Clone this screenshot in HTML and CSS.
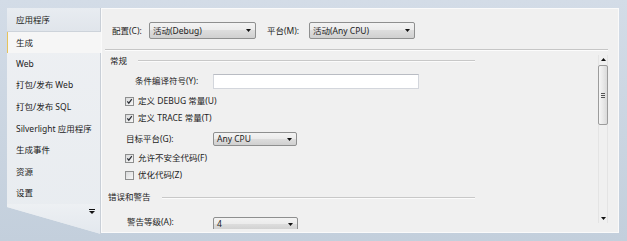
FILE: index.html
```html
<!DOCTYPE html>
<html>
<head>
<meta charset="utf-8">
<link rel="stylesheet" href="styles.css">
</head>
<body>
<div class="app">
  <nav class="tabs">
    <div class="tab tab-first">应用程序</div>
    <div class="tab tab-selected">生成</div>
    <div class="tab">Web</div>
    <div class="tab">打包/发布 Web</div>
    <div class="tab">打包/发布 SQL</div>
    <div class="tab">Silverlight 应用程序</div>
    <div class="tab">生成事件</div>
    <div class="tab">资源</div>
    <div class="tab">设置</div>
    <div class="tabs-fill">
      <svg class="more" width="6" height="5" viewBox="0 0 6 5"><rect x="0" y="0" width="6" height="1" fill="#111"/><path d="M0 2H6L3 5Z" fill="#111"/></svg>
    </div>
  </nav>
  <main class="panel">
    <div class="config-row">
      <span class="cfg-label cfg-label-1">配置(C):</span>
      <div class="combo combo-cfg"><span>活动(Debug)</span><svg class="arrow" width="5" height="3" viewBox="0 0 5 3"><path d="M0 0H5L2.5 3Z" fill="#111"/></svg></div>
      <span class="cfg-label cfg-label-2">平台(M):</span>
      <div class="combo combo-plat"><span>活动(Any CPU)</span><svg class="arrow" width="5" height="3" viewBox="0 0 5 3"><path d="M0 0H5L2.5 3Z" fill="#111"/></svg></div>
    </div>
    <div class="sep"></div>
    <div class="scroll">
      <div class="content">
        <div class="row r1 group"><span class="group-title">常规</span><span class="group-line"></span></div>
        <div class="row r2 field-sym"><span class="lbl lbl-sym">条件编译符号(Y):</span><div class="textbox"></div></div>
        <div class="row r3 check"><span class="cb"><svg width="7" height="7" viewBox="0 0 7 7"><path d="M1.3 3.4L2.8 5.2L5.8 1.2" fill="none" stroke="#2b2f36" stroke-width="1.2"/></svg></span><span>定义 DEBUG 常量(U)</span></div>
        <div class="row r4 check"><span class="cb"><svg width="7" height="7" viewBox="0 0 7 7"><path d="M1.3 3.4L2.8 5.2L5.8 1.2" fill="none" stroke="#2b2f36" stroke-width="1.2"/></svg></span><span>定义 TRACE 常量(T)</span></div>
        <div class="row r5 field"><span class="lbl lbl-wide">目标平台(G):</span><div class="combo combo-small"><span>Any CPU</span><svg class="arrow" width="5" height="3" viewBox="0 0 5 3"><path d="M0 0H5L2.5 3Z" fill="#111"/></svg></div></div>
        <div class="row r6 check"><span class="cb"><svg width="7" height="7" viewBox="0 0 7 7"><path d="M1.3 3.4L2.8 5.2L5.8 1.2" fill="none" stroke="#2b2f36" stroke-width="1.2"/></svg></span><span>允许不安全代码(F)</span></div>
        <div class="row r7 check"><span class="cb"></span><span>优化代码(Z)</span></div>
        <div class="row r8 group group-err"><span class="group-title">错误和警告</span><span class="group-line"></span></div>
        <div class="row r9 field field-warn"><span class="lbl lbl-warn">警告等级(A):</span><div class="combo combo-small combo-warn"><span>4</span><svg class="arrow" width="5" height="3" viewBox="0 0 5 3"><path d="M0 0H5L2.5 3Z" fill="#111"/></svg></div></div>
      </div>
      <div class="scrollbar">
        <div class="sb-btn sb-up"><svg width="5" height="3" viewBox="0 0 5 3"><path d="M0 3H5L2.5 0Z" fill="#111"/></svg></div>
        <div class="sb-thumb"><span class="grip"></span><span class="grip"></span><span class="grip"></span></div>
        <div class="sb-track"></div>
        <div class="sb-btn sb-down"><svg width="5" height="3" viewBox="0 0 5 3"><path d="M0 0H5L2.5 3Z" fill="#111"/></svg></div>
      </div>
    </div>
  </main>
</div>
</body>
</html>
```

FILE: styles.css
```css
* { box-sizing: border-box; }
html, body { margin: 0; padding: 0; }
body {
  width: 627px;
  height: 241px;
  overflow: hidden;
  background: linear-gradient(#d3dce7, #c3cfdc);
  font-family: "Noto Sans", "Noto Sans CJK SC", sans-serif;
  font-size: 8.5px;
  line-height: 12px;
  color: #1c1c1c;
}
.app {
  display: flex;
  align-items: flex-start;
  height: 241px;
  padding: 8px 0 0 7px;
}

/* left tab list */
.tabs {
  width: 94px;
  height: 226px;
  flex: none;
  display: flex;
  flex-direction: column;
  background: linear-gradient(#eef0f3, #e8ecf0);
  clip-path: polygon(0 0, 100% 0, 100% 100%, 0 199px);
}
.tab {
  height: 21.6px;
  flex: none;
  display: flex;
  align-items: center;
  padding-left: 9px;
  border-right: 1px solid #c9cfd7;
  white-space: nowrap;
}
.tab-first {
  height: 24px;
  background: linear-gradient(#e8ecf1, #e0e5eb);
  border-bottom: 1px solid #cdd3da;
}
.tab-selected {
  height: 21px;
  background: #f6f6f6;
  border-right: none;
  border-left: 1px solid #e6c35c;
  padding-left: 8px;
}
.tabs-fill {
  flex: 1;
  display: flex;
  justify-content: flex-end;
  align-items: flex-start;
  padding: 5px 5px 0 0;
  border-right: 1px solid #c9cfd7;
  background: linear-gradient(#edf0f3, #e3e8ee);
}
.more { display: block; }

/* main panel */
.panel {
  width: 518px;
  height: 225px;
  flex: none;
  background: #f0f0f0;
  border: 1px solid #fafafa;
  display: flex;
  flex-direction: column;
}
.config-row {
  display: flex;
  align-items: center;
  height: 17px;
  margin-top: 13px;
  padding-left: 10px;
  flex: none;
}
.cfg-label { white-space: nowrap; }
.cfg-label-1 { width: 37px; }
.cfg-label-2 { width: 42px; margin-left: 11px; }
.combo {
  display: flex;
  align-items: center;
  justify-content: space-between;
  border: 1px solid #8e8f8f;
  border-radius: 2px;
  background: linear-gradient(#f3f3f3, #ebebeb 50%, #dddddd 50%, #d0d0d0);
  padding: 0 4px 0 3px;
  white-space: nowrap;
}
.combo-cfg { width: 107px; height: 17px; }
.combo-plat { width: 106px; height: 17px; }
.combo-small { width: 84px; height: 14px; }
.combo-warn { width: 85px; margin-top: 4px; }
.arrow { display: block; flex: none; }

.sep {
  flex: none;
  height: 2px;
  margin: 10px 10px 0 3px;
  border-top: 1px solid #c6c6c6;
  border-bottom: 1px solid #fcfcfc;
}
.scroll {
  flex: none;
  height: 178px;
  display: flex;
  overflow: hidden;
}
.content {
  width: 496px;
  flex: none;
  display: flex;
  flex-direction: column;
}
.row {
  display: flex;
  align-items: center;
  flex: none;
  white-space: nowrap;
}
.r1 { height: 19px; }
.r2 { height: 22px; }
.r3 { height: 18px; }
.r4 { height: 16px; }
.r5 { height: 26px; }
.r6 { height: 12px; }
.r7 { height: 22px; }
.r8 { height: 22px; }
.r9 { height: 28px; }

.group { padding-left: 8px; }
.group-err { padding-left: 6px; }
.group-line {
  flex: 1;
  height: 2px;
  margin: 1px 123px 0 11px;
  border-top: 1px solid #c8c8c8;
  border-bottom: 1px solid #fbfbfb;
}
.field-sym { padding-left: 33px; }
.lbl-sym { width: 78px; }
.textbox {
  width: 206px;
  height: 15px;
  background: #ffffff;
  border: 1px solid #d3d6dc;
  border-top-color: #b9bcc3;
}
.check { padding-left: 23px; }
.cb {
  width: 9px;
  height: 9px;
  flex: none;
  margin-right: 4px;
  border: 1px solid #8e8f8f;
  background: linear-gradient(135deg, #d9dadb, #f7f7f7);
  display: flex;
  align-items: center;
  justify-content: center;
}
.cb svg { display: block; }
.field { padding-left: 24px; }
.lbl-wide { width: 87px; }
.field-warn { padding-left: 25px; }
.lbl-warn { width: 86px; }

/* scrollbar */
.scrollbar {
  width: 10px;
  height: 168px;
  margin-top: 4px;
  flex: none;
  display: flex;
  flex-direction: column;
  border-left: 1px solid #e4e4e4;
  border-right: 1px solid #e4e4e4;
}
.sb-btn {
  flex: none;
  display: flex;
  justify-content: center;
  align-items: center;
}
.sb-btn svg { display: block; }
.sb-up { height: 9px; }
.sb-down { height: 10px; }
.sb-thumb {
  flex: none;
  height: 60px;
  margin: 1px -1px 0 -1px;
  border: 1px solid #9c9c9c;
  border-radius: 2px;
  background: linear-gradient(90deg, #f6f6f6, #e9e9e9 50%, #dadada);
  display: flex;
  flex-direction: column;
  align-items: center;
  justify-content: center;
  gap: 1px;
}
.grip {
  width: 4px;
  height: 1px;
  background: #555;
}
.sb-track { flex: 1; }
```
